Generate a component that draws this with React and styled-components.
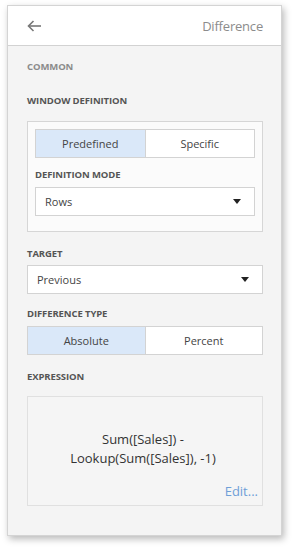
import React, { useState } from "react";
import styled, { createGlobalStyle } from "styled-components";

const GlobalStyle = createGlobalStyle`
  html, body {
    margin: 0;
    padding: 0;
    background: #ffffff;
    font-family: "Open Sans", "Noto Sans", sans-serif;
  }
`;

const Page = styled.div`
  width: 296px;
  height: 552px;
  padding: 5px 0 0 7px;
  box-sizing: border-box;
`;

const Panel = styled.div`
  width: 275px;
  height: 531px;
  box-sizing: border-box;
  border: 1px solid #d4d4d4;
  background: #f4f4f4;
  box-shadow: 2px 3px 7px rgba(0, 0, 0, 0.28);
  display: flex;
  flex-direction: column;
`;

const Header = styled.div`
  height: 40px;
  background: #ffffff;
  border-bottom: 1px solid #d2d2d2;
  display: flex;
  align-items: center;
  justify-content: space-between;
  padding: 0 18px 0 19px;
  box-sizing: border-box;
  flex-shrink: 0;
`;

const Title = styled.div`
  font-size: 13px;
  color: #8c8c8c;
  letter-spacing: -0.2px;
`;

const BackButton = styled.div`
  width: 16px;
  height: 14px;
  display: flex;
  align-items: center;
  color: #777777;
  margin-top: 1px;
`;

const Body = styled.div`
  padding: 15px 18px 0 19px;
  display: flex;
  flex-direction: column;
`;

const Caption = styled.div`
  font-size: 9.5px;
  font-weight: 700;
  text-transform: uppercase;
  color: ${p => (p.$muted ? "#8b8b8b" : "#555555")};
  line-height: 12px;
  margin-bottom: ${p => p.$gap || 8}px;
  letter-spacing: -0.1px;
`;

const Group = styled.div`
  border: 1px solid #d6d6d6;
  background: #fbfbfb;
  padding: 7px 7px 15px 7px;
  margin-bottom: 16px;
  display: flex;
  flex-direction: column;
`;

const Segmented = styled.div`
  display: flex;
  height: 29px;
  border: 1px solid #d3d3d3;
  background: #ffffff;
  box-sizing: border-box;
  margin-bottom: ${p => p.$mb || 0}px;
`;

const Segment = styled.div`
  flex: 1;
  display: flex;
  align-items: center;
  justify-content: center;
  font-size: 11px;
  color: #444444;
  background: ${p => (p.$active ? "#dae8f9" : "#ffffff")};
  & + & {
    border-left: 1px solid #d3d3d3;
  }
  cursor: pointer;
`;

const Select = styled.div`
  height: 29px;
  box-sizing: border-box;
  border: 1px solid #d3d3d3;
  background: #ffffff;
  display: flex;
  align-items: center;
  justify-content: space-between;
  padding: 0 13px 0 9px;
  font-size: 11px;
  color: #444444;
  margin-bottom: ${p => p.$mb || 0}px;
`;

const Caret = styled.div`
  width: 0;
  height: 0;
  border-left: 4.5px solid transparent;
  border-right: 4.5px solid transparent;
  border-top: 5px solid #222222;
`;

const ExpressionBox = styled.div`
  height: 110px;
  box-sizing: border-box;
  border: 1px solid #e0e0e0;
  background: #f5f5f5;
  display: flex;
  flex-direction: column;
  padding: 0 4px 6px 0;
`;

const ExpressionText = styled.div`
  flex: 1;
  display: flex;
  align-items: center;
  justify-content: center;
  text-align: center;
  font-size: 13px;
  line-height: 19px;
  color: #333333;
  padding-top: 18px;
`;

const EditLink = styled.div`
  align-self: flex-end;
  font-size: 13px;
  color: #6f9fd8;
  line-height: 16px;
  cursor: pointer;
`;

const ArrowIcon = () => (
  <svg width="15" height="12" viewBox="0 0 15 12" fill="none">
    <path d="M14 6H2" stroke="currentColor" strokeWidth="1.6" />
    <path d="M6.5 1L1.5 6L6.5 11" stroke="currentColor" strokeWidth="1.6" />
  </svg>
);

export default function App() {
  const [mode, setMode] = useState("predefined");
  const [type, setType] = useState("absolute");

  return (
    <>
      <GlobalStyle />
      <Page>
        <Panel>
          <Header>
            <BackButton>
              <ArrowIcon />
            </BackButton>
            <Title>Difference</Title>
          </Header>
          <Body>
            <Caption $muted $gap={22}>Common</Caption>
            <Caption $gap={14}>Window Definition</Caption>
            <Group>
              <Segmented $mb={11}>
                <Segment $active={mode === "predefined"} onClick={() => setMode("predefined")}>
                  Predefined
                </Segment>
                <Segment $active={mode === "specific"} onClick={() => setMode("specific")}>
                  Specific
                </Segment>
              </Segmented>
              <Caption $gap={6}>Definition Mode</Caption>
              <Select>
                <span>Rows</span>
                <Caret />
              </Select>
            </Group>
            <Caption $gap={5}>Target</Caption>
            <Select $mb={14}>
              <span>Previous</span>
              <Caret />
            </Select>
            <Caption $gap={6}>Difference Type</Caption>
            <Segmented $mb={16}>
              <Segment $active={type === "absolute"} onClick={() => setType("absolute")}>
                Absolute
              </Segment>
              <Segment $active={type === "percent"} onClick={() => setType("percent")}>
                Percent
              </Segment>
            </Segmented>
            <Caption $gap={13}>Expression</Caption>
            <ExpressionBox>
              <ExpressionText>
                Sum([Sales]) -
                <br />
                Lookup(Sum([Sales]), -1)
              </ExpressionText>
              <EditLink>Edit...</EditLink>
            </ExpressionBox>
          </Body>
        </Panel>
      </Page>
    </>
  );
}
